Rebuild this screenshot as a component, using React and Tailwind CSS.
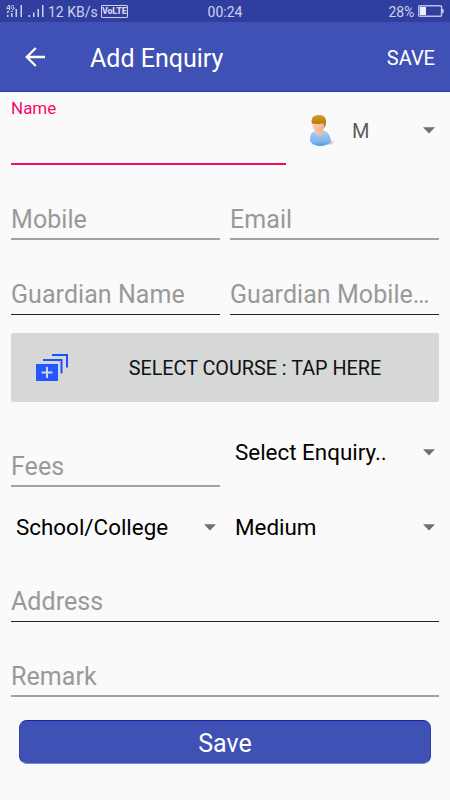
import { clsx } from "clsx";

function SignalBars({ sim }) {
  return (
    <svg width="17" height="13" viewBox="0 0 17 13" fill="#cdd2ec">
      {sim ? (
        <>
          <path d="M3.2 0 0.4 3.4h3.1V5M3.4 0v5M8 1.2C6.8-.2 5.2.7 5.2 2.5s1.8 2.6 2.9 1.5V2.7H7" fill="none" stroke="#cdd2ec" strokeWidth="1" />
          <path d="M1 6.3h2.5M1.8 6.5v2M4.8 6.3H7" fill="none" stroke="#cdd2ec" strokeWidth="1" />
          <rect x="1" y="10" width="1.5" height="2" />
          <rect x="5" y="8" width="1.5" height="4" />
          <rect x="9.5" y="4" width="1.5" height="8" />
          <rect x="14.5" y="0" width="1.5" height="12" />
        </>
      ) : (
        <>
          <rect x="0.5" y="10" width="1.6" height="2" />
          <rect x="5" y="7.5" width="1.5" height="4.5" />
          <rect x="9.5" y="4" width="1.5" height="8" />
          <rect x="14" y="0" width="1.5" height="12" />
        </>
      )}
    </svg>
  );
}

function StatusBar() {
  return (
    <div className="grid h-[22px] grid-cols-3 items-center bg-[#303f9f] text-[14px] leading-[20px] text-[#cdd2ec]">
      <div className="flex items-center pl-1.5 whitespace-nowrap">
        <SignalBars sim />
        <span className="ml-[5px] flex">
          <SignalBars />
        </span>
        <span className="ml-[3px] pt-0.5">12 KB/s</span>
        <span className="ml-[3px] flex h-[13px] w-[27px] items-center justify-center rounded-[1px] border border-[#cdd2ec] text-[9px] leading-none font-black tracking-[-0.2px]">
          VoLTE
        </span>
      </div>
      <span className="pt-0.5 text-center">00:24</span>
      <div className="flex items-center justify-end pr-[6px]">
        <span className="pt-px tracking-[-0.2px]">28%</span>
        <svg className="ml-1" width="26" height="12" viewBox="0 0 26 12">
          <rect x="0.75" y="0.75" width="22.8" height="10.5" rx="1" fill="none" stroke="#b9c0e4" strokeWidth="1.5" />
          <rect x="2" y="2" width="6" height="8" fill="#eceefa" />
          <rect x="24" y="4" width="1.6" height="4" fill="#cdd2ec" />
        </svg>
      </div>
    </div>
  );
}

function AppBar() {
  return (
    <header className="flex h-[70px] items-center border-b border-[#303f9f] bg-[#3f51b5] pr-[15px] pl-[25px] text-white">
      <svg className="mt-px" width="20" height="20" viewBox="0 0 20 20" fill="none" stroke="white" strokeWidth="2.3">
        <path d="M20 10H2M10.8 1 1.7 10l9.1 9" />
      </svg>
      <h1 className="ml-[45px] flex-1 pt-[5px] text-[25px] leading-[30px]">Add Enquiry</h1>
      <button className="pt-[3px] text-[20px] leading-6">SAVE</button>
    </header>
  );
}

function Field({ label, dark, className }) {
  return (
    <div
      className={clsx(
        "flex flex-col justify-end",
        dark ? "border-b border-[#222222] pb-1" : "border-b-2 border-[#a3a3a3] pb-[3px]",
        className
      )}
    >
      <span className="whitespace-nowrap text-[25px] leading-[30px] tracking-[0.06px] text-[#999999]">{label}</span>
    </div>
  );
}

function Arrow() {
  return (
    <svg width="12" height="7" viewBox="0 0 12 7" fill="#707070">
      <path d="M0 .3h12L6 6.5z" />
    </svg>
  );
}

function Select({ label, className }) {
  return (
    <div className={clsx("flex items-center justify-between pr-1 pl-[5px]", className)}>
      <span className="text-[22.4px] leading-7 text-black">{label}</span>
      <Arrow />
    </div>
  );
}

function Avatar() {
  return (
    <svg width="30" height="33" viewBox="0 0 30 33">
      <defs>
        <linearGradient id="shirt" x1="0" y1="0" x2="0" y2="1">
          <stop offset="0" stopColor="#a7d2fb" />
          <stop offset="0.7" stopColor="#80b5ef" />
          <stop offset="1" stopColor="#5c94d4" />
        </linearGradient>
        <linearGradient id="hair" x1="0" y1="0" x2="0" y2="1">
          <stop offset="0" stopColor="#d79a22" />
          <stop offset="1" stopColor="#a96d08" />
        </linearGradient>
        <linearGradient id="skin" x1="0" y1="0" x2="1" y2="1">
          <stop offset="0" stopColor="#ffdfcc" />
          <stop offset="1" stopColor="#efa980" />
        </linearGradient>
        <radialGradient id="shade">
          <stop offset="0" stopColor="#8c8c8c" />
          <stop offset="1" stopColor="#8c8c8c" stopOpacity="0" />
        </radialGradient>
      </defs>
      <ellipse cx="18.500" cy="28.500" rx="8.500" ry="3" fill="url(#shade)" />
      <path d="M2 27c-.3-4 .2-8.500 5-10l7.500-.8c5 .8 7.700 5 8.500 10.800-2 3.500-6.500 5-10.400 5-4.500 0-9.100-2-10.600-5z" fill="url(#shirt)" />
      <path d="M6.500 16.500c1.500 3.500 4 6 6.500 6.200 1.500-1.200 2.300-3.700 2-6.700l-2.500-2z" fill="url(#skin)" />
      <path d="M4 8c0-4 2.500-6 6.300-6s6.700 2.500 6.700 6.500c0 5-2 10-6 10S4 14 4 8z" fill="url(#skin)" />
      <path d="M3.800 9.500C2.700 4 5.500 1.200 10.500 1c5.500-.2 8.200 3 7.500 8-.2 2.500-.9 4-1.700 5 .1-2.200-.3-3.700-1.200-4.700-3 .8-8.500.9-11.300.2z" fill="url(#hair)" />
    </svg>
  );
}

function CourseIcon() {
  return (
    <svg width="32" height="28" viewBox="0 0 32 28" fill="none" stroke="#1f50ff" strokeWidth="2">
      <path d="M16 1h15V13.500M7 6h18.500V19.500" />
      <path d="M0 10h22v17H0z" fill="#2457ff" stroke="none" />
      <path d="M5.500 18.500h11M11 13v11" stroke="#d6d7d7" />
    </svg>
  );
}

export default function App() {
  return (
    <div className="flex h-[800px] w-[450px] flex-col overflow-hidden bg-[#fafafa] font-[Roboto,sans-serif]">
      <StatusBar />
      <AppBar />

      <main className="px-[11px]">
        {/* Name and gender */}
        <div className="flex h-[73px]">
          <div className="w-[275px] border-b-2 border-[#f50a6c] pt-[6px]">
            <span className="block text-[17px] leading-5 text-[#f50a6c]">Name</span>
          </div>
          <div className="flex h-[77px] flex-1 items-center pr-1 pl-[22px]">
            <Avatar />
            <span className="ml-[14px] flex-1 text-[20px] text-[#5c5c5c]">M</span>
            <Arrow />
          </div>
        </div>

        {/* Contact details */}
        <div className="grid h-[75px] grid-cols-2 gap-[10px]">
          <Field label="Mobile" />
          <Field label="Email" />
        </div>
        <div className="grid h-[75px] grid-cols-2 gap-[10px]">
          <Field label="Guardian Name" dark />
          <Field label="Guardian Mobile…" dark />
        </div>

        {/* Course picker */}
        <button className="mt-[18px] flex h-[69px] w-full items-center rounded-[2px] bg-[#d6d7d7] pl-[25px] text-[19.8px] text-[#111111]">
          <CourseIcon />
          <span className="flex-1 pt-[3px] pl-[3px] text-center">SELECT COURSE : TAP HERE</span>
        </button>

        {/* Fees and education */}
        <div className="grid h-[85px] grid-cols-2 items-start gap-[10px]">
          <Field label="Fees" className="h-[85px]" />
          <Select label="Select Enquiry.." className="h-[100px]" />
        </div>
        <div className="grid h-[80px] grid-cols-2 gap-[10px]">
          <Select label="School/College" />
          <Select label="Medium" />
        </div>

        <Field label="Address" dark className="h-[55px]" />
        <Field label="Remark" className="h-[75px]" />

        <button className="mx-2 mt-[23px] flex h-[44px] w-[412px] items-center justify-center rounded-[8px] border border-x-[#2f3fae] border-t-[#1a22a8] border-b-[#7c88cd] bg-[#3f51b5] pt-[3px] text-[25px] leading-[30px] text-white">
          Save
        </button>
      </main>
    </div>
  );
}
